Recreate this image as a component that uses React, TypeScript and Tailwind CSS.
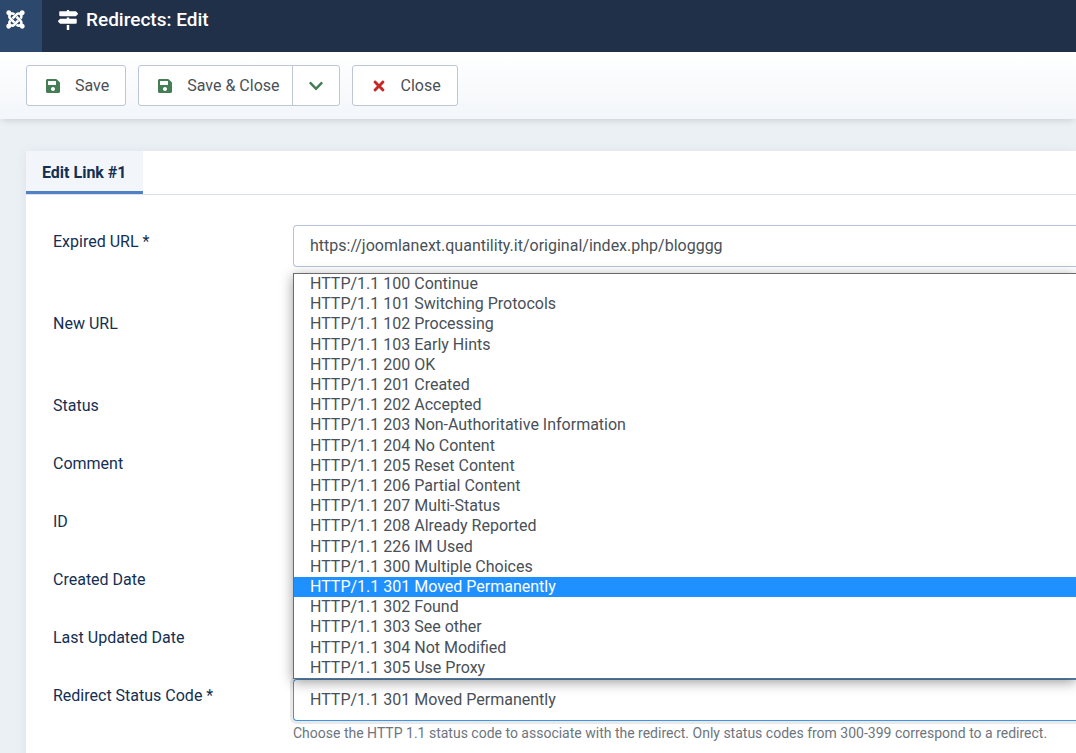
import React from "react";
import { FaChevronDown, FaJoomla, FaMapSigns, FaSave, FaTimes } from "react-icons/fa";

const statusCodes = [
  "HTTP/1.1 100 Continue",
  "HTTP/1.1 101 Switching Protocols",
  "HTTP/1.1 102 Processing",
  "HTTP/1.1 103 Early Hints",
  "HTTP/1.1 200 OK",
  "HTTP/1.1 201 Created",
  "HTTP/1.1 202 Accepted",
  "HTTP/1.1 203 Non-Authoritative Information",
  "HTTP/1.1 204 No Content",
  "HTTP/1.1 205 Reset Content",
  "HTTP/1.1 206 Partial Content",
  "HTTP/1.1 207 Multi-Status",
  "HTTP/1.1 208 Already Reported",
  "HTTP/1.1 226 IM Used",
  "HTTP/1.1 300 Multiple Choices",
  "HTTP/1.1 301 Moved Permanently",
  "HTTP/1.1 302 Found",
  "HTTP/1.1 303 See other",
  "HTTP/1.1 304 Not Modified",
  "HTTP/1.1 305 Use Proxy",
];

const selectedCode = "HTTP/1.1 301 Moved Permanently";

const labelClass = "w-60 shrink-0 pt-[5px] text-[#132f53]";

const fieldClass =
  "block h-[42px] w-full rounded-l border border-r-0 border-[#b5c3de] bg-white px-4 pb-0.5 text-[#495057] outline-none";

function Row({
  id,
  label,
  tall,
  children,
}: {
  id: string;
  label: string;
  tall?: boolean;
  children: React.ReactNode;
}) {
  return (
    <div className={tall ? "flex pb-10" : "flex pb-4"}>
      <label htmlFor={id} className={labelClass}>
        {label}
      </label>
      <div className="min-w-0 flex-1">{children}</div>
    </div>
  );
}

const buttonClass =
  "flex h-[41px] items-center gap-3 border border-[#bdc6d6] bg-white px-4 text-[#495057]";

export default function App() {
  const [code, setCode] = React.useState(selectedCode);
  return (
    <div className="min-h-screen overflow-x-hidden bg-[#ebf0f5] font-['Roboto',sans-serif] text-base leading-6">
      <header className="flex h-[52px] bg-[#1f3048] text-white">
        <a href="#home" aria-label="Joomla" className="flex w-[42px] bg-[#2c486c] pt-[9px] pl-[5px]">
          <FaJoomla size={21} />
        </a>
        <h1 className="flex h-10 items-center gap-2 pl-4 text-[19px] font-medium">
          <FaMapSigns size={20} />
          Redirects: Edit
        </h1>
      </header>

      <div className="relative flex h-[67px] gap-3 bg-linear-to-b from-white to-[#f3f6fa] pt-[13px] pl-[26px] shadow-[0_4px_6px_-2px_rgba(0,0,0,0.12)]">
        <button type="button" className={`${buttonClass} rounded-[3px]`}>
          <span className="flex w-5 justify-center text-[#457d54]">
            <FaSave size={16} />
          </span>
          Save
        </button>
        <div className="flex">
          <button type="button" className={`${buttonClass} rounded-l-[3px] pr-3`}>
            <span className="flex w-5 justify-center text-[#457d54]">
              <FaSave size={16} />
            </span>
            Save &amp; Close
          </button>
          <button
            type="button"
            aria-label="More save options"
            className="-ml-px flex h-[41px] w-12 items-center justify-center rounded-r-[3px] border border-[#bdc6d6] bg-white text-[#457d54]"
          >
            <FaChevronDown size={16} />
          </button>
        </div>
        <button type="button" className={`${buttonClass} rounded-[3px]`}>
          <span className="flex w-5 justify-center text-[#c52827]">
            <FaTimes size={16} />
          </span>
          Close
        </button>
      </div>

      <main className="pt-8 pl-[26px]">
        <section className="bg-white shadow-[0_1px_12px_rgba(20,40,90,0.06)]">
          <div role="tablist" className="flex h-11 border-b border-[#d9e0ef]">
            <button
              type="button"
              role="tab"
              aria-selected="true"
              className="h-[43px] border-b-[3px] border-[#5081c5] bg-[#f2f6fa] px-4 pt-[3px] font-bold text-[#132f53]"
            >
              Edit Link #1
            </button>
          </div>

          <form className="pt-[30px] pb-5 pl-[27px]" onSubmit={(e) => e.preventDefault()}>
            <Row id="expired" label="Expired URL *" tall>
              <input
                id="expired"
                type="text"
                defaultValue="https://joomlanext.quantility.it/original/index.php/blogggg"
                className={fieldClass}
              />
            </Row>
            <Row id="new-url" label="New URL" tall>
              <input id="new-url" type="text" className={fieldClass} />
            </Row>
            <Row id="status" label="Status">
              <input id="status" type="text" className={fieldClass} />
            </Row>
            <Row id="comment" label="Comment">
              <input id="comment" type="text" className={fieldClass} />
            </Row>
            <Row id="link-id" label="ID">
              <input id="link-id" type="text" readOnly className={fieldClass} />
            </Row>
            <Row id="created" label="Created Date">
              <input id="created" type="text" readOnly className={fieldClass} />
            </Row>
            <Row id="updated" label="Last Updated Date">
              <input id="updated" type="text" readOnly className={fieldClass} />
            </Row>
            <div className="flex">
              <label htmlFor="code" className={labelClass}>
                Redirect Status Code *
              </label>
              <div className="min-w-0 flex-1">
                <div className="relative">
                  <select
                    id="code"
                    value={code}
                    onChange={(e) => setCode(e.target.value)}
                    className="block h-[42px] w-full appearance-none rounded-l border border-r-0 border-[#3b95ec] bg-white px-4 text-[#495057] shadow-[0_0_0_3px_#e9e9ea] outline-none"
                  >
                    {statusCodes.map((item) => (
                      <option key={item}>{item}</option>
                    ))}
                  </select>
                  <ul
                    role="listbox"
                    aria-label="Redirect Status Code"
                    className="absolute inset-x-0 bottom-full grid h-[406px] auto-rows-fr border border-r-0 border-[#6b6b6b] bg-white text-[#495057] shadow-[0_3px_12px_rgba(0,0,0,0.4)]"
                  >
                    {statusCodes.map((item) => (
                      <li
                        key={item}
                        role="option"
                        aria-selected={item === code}
                        onClick={() => setCode(item)}
                        className={
                          item === code
                            ? "bg-[#1e90ff] pl-4 leading-5 text-white"
                            : "pl-4 leading-5"
                        }
                      >
                        {item}
                      </li>
                    ))}
                  </ul>
                </div>
                <p className="pt-0.5 text-sm whitespace-nowrap text-[#6d757e]">
                  Choose the HTTP 1.1 status code to associate with the redirect. Only status codes
                  from 300-399 correspond to a redirect.
                </p>
              </div>
            </div>
          </form>
        </section>
      </main>
    </div>
  );
}
